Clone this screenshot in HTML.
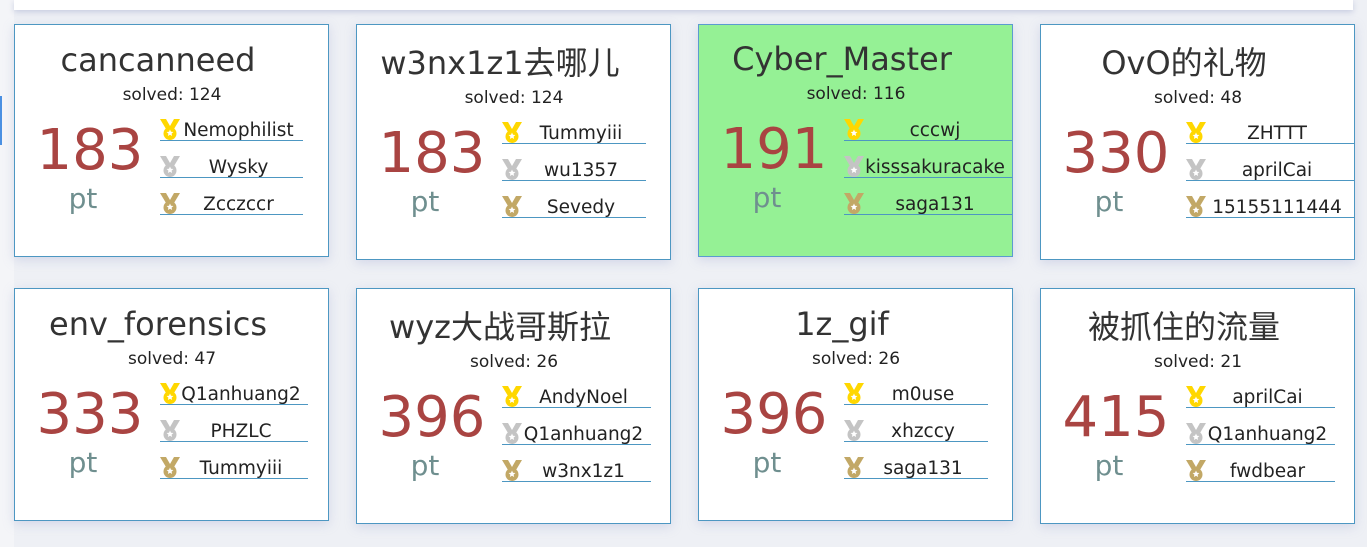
<!DOCTYPE html>
<html><head><meta charset="utf-8"><style>
*{margin:0;padding:0;box-sizing:border-box}
body{width:1367px;height:547px;background:#eef0f5;position:relative;overflow:hidden;font-family:"DejaVu Sans","Noto Sans CJK SC",sans-serif;color:#333}
.left{position:absolute;left:0;top:0;width:14px;height:547px;background:#f4f5f8}
.lbar{position:absolute;left:0;top:96px;width:2px;height:49px;background:#4a90e2}
.top{position:absolute;left:14px;top:0;width:1339px;height:10px;background:#fff;box-shadow:0 2px 6px rgba(150,160,200,.45)}
.card{position:absolute;width:315px;background:#fff;border:1px solid #4d97c2;box-shadow:0 3px 10px rgba(160,170,210,.35)}
.card.g{background:#95f195;border-color:#5b9bd0}
.in{position:absolute;left:0;right:0;top:0;bottom:0}
.nm{position:absolute;left:0;width:286px;top:14px;line-height:42px;font-size:32px;text-align:center;white-space:nowrap;color:#333}
.sv{position:absolute;left:0;width:314px;top:60px;line-height:20px;font-size:17px;text-align:center;color:#222}
.sc{position:absolute;left:0;width:150px;top:98px;line-height:56px;font-size:56px;text-align:center;color:#a94442}
.pt{position:absolute;left:0;width:136px;top:160px;line-height:28px;font-size:28px;text-align:center;color:#6f8f8f}
.rows{position:absolute;left:145px;top:79px}
.r{position:relative;height:37px;border-bottom:1px solid #4d97c2;white-space:nowrap}
.r span{display:block;text-align:center;padding-left:14px;padding-top:17px;line-height:20px;font-size:18.5px;color:#222}
.r svg{position:absolute;left:0;top:15px;z-index:2}
</style></head><body>
<div class="left"><div class="lbar"></div></div>
<div class="top"></div>

<svg width="0" height="0" style="position:absolute">
<defs>
<g id="mg"><path d="M0 0h6l4 7 4-7h6l-6 10h-8z" fill="#ffd700"/><circle cx="10" cy="14.5" r="6.5" fill="#ffd700"/><path d="M10 10.5l1 2.2 2.4.3-1.8 1.6.5 2.4-2.1-1.2-2.1 1.2.5-2.4-1.8-1.6 2.4-.3z" fill="#fff"/></g>
<g id="ms"><path d="M0 0h6l4 7 4-7h6l-6 10h-8z" fill="#c4c4c4"/><circle cx="10" cy="14.5" r="6.5" fill="#c4c4c4"/><path d="M10 10.5l1 2.2 2.4.3-1.8 1.6.5 2.4-2.1-1.2-2.1 1.2.5-2.4-1.8-1.6 2.4-.3z" fill="#fff"/></g>
<g id="mb"><path d="M0 0h6l4 7 4-7h6l-6 10h-8z" fill="#c2a866"/><circle cx="10" cy="14.5" r="6.5" fill="#c2a866"/><path d="M10 10.5l1 2.2 2.4.3-1.8 1.6.5 2.4-2.1-1.2-2.1 1.2.5-2.4-1.8-1.6 2.4-.3z" fill="#fff"/></g>
</defs></svg>

<!-- Row 1 -->
<div class="card" style="left:14px;top:24px;height:233px"><div class="in">
<div class="nm">cancanneed</div><div class="sv">solved: 124</div><div class="sc">183</div><div class="pt">pt</div>
<div class="rows" style="width:143px"><div class="r"><svg width="20" height="22"><use href="#mg"/></svg><span>Nemophilist</span></div><div class="r"><svg width="20" height="22"><use href="#ms"/></svg><span>Wysky</span></div><div class="r"><svg width="20" height="22"><use href="#mb"/></svg><span>Zcczccr</span></div></div>
</div></div>

<div class="card" style="left:356px;top:24px;height:236px"><div class="in" style="top:3px">
<div class="nm">w3nx1z1去哪儿</div><div class="sv">solved: 124</div><div class="sc">183</div><div class="pt">pt</div>
<div class="rows" style="width:144px"><div class="r"><svg width="20" height="22"><use href="#mg"/></svg><span>Tummyiii</span></div><div class="r"><svg width="20" height="22"><use href="#ms"/></svg><span>wu1357</span></div><div class="r"><svg width="20" height="22"><use href="#mb"/></svg><span>Sevedy</span></div></div>
</div></div>

<div class="card g" style="left:698px;top:24px;height:233px"><div class="in" style="top:-1px">
<div class="nm">Cyber_Master</div><div class="sv">solved: 116</div><div class="sc">191</div><div class="pt">pt</div>
<div class="rows" style="width:168px;top:80px"><div class="r"><svg width="20" height="22"><use href="#mg"/></svg><span>cccwj</span></div><div class="r"><svg width="20" height="22"><use href="#ms"/></svg><span>kisssakuracake</span></div><div class="r"><svg width="20" height="22"><use href="#mb"/></svg><span>saga131</span></div></div>
</div></div>

<div class="card" style="left:1040px;top:24px;height:236px"><div class="in" style="top:3px">
<div class="nm">OvO的礼物</div><div class="sv">solved: 48</div><div class="sc">330</div><div class="pt">pt</div>
<div class="rows" style="width:168px"><div class="r"><svg width="20" height="22"><use href="#mg"/></svg><span>ZHTTT</span></div><div class="r"><svg width="20" height="22"><use href="#ms"/></svg><span>aprilCai</span></div><div class="r"><svg width="20" height="22"><use href="#mb"/></svg><span>15155111444</span></div></div>
</div></div>

<!-- Row 2 -->
<div class="card" style="left:14px;top:288px;height:233px"><div class="in">
<div class="nm">env_forensics</div><div class="sv">solved: 47</div><div class="sc">333</div><div class="pt">pt</div>
<div class="rows" style="width:148px"><div class="r"><svg width="20" height="22"><use href="#mg"/></svg><span>Q1anhuang2</span></div><div class="r"><svg width="20" height="22"><use href="#ms"/></svg><span>PHZLC</span></div><div class="r"><svg width="20" height="22"><use href="#mb"/></svg><span>Tummyiii</span></div></div>
</div></div>

<div class="card" style="left:356px;top:288px;height:236px"><div class="in" style="top:3px">
<div class="nm">wyz大战哥斯拉</div><div class="sv">solved: 26</div><div class="sc">396</div><div class="pt">pt</div>
<div class="rows" style="width:149px"><div class="r"><svg width="20" height="22"><use href="#mg"/></svg><span>AndyNoel</span></div><div class="r"><svg width="20" height="22"><use href="#ms"/></svg><span>Q1anhuang2</span></div><div class="r"><svg width="20" height="22"><use href="#mb"/></svg><span>w3nx1z1</span></div></div>
</div></div>

<div class="card" style="left:698px;top:288px;height:233px"><div class="in">
<div class="nm">1z_gif</div><div class="sv">solved: 26</div><div class="sc">396</div><div class="pt">pt</div>
<div class="rows" style="width:144px"><div class="r"><svg width="20" height="22"><use href="#mg"/></svg><span>m0use</span></div><div class="r"><svg width="20" height="22"><use href="#ms"/></svg><span>xhzccy</span></div><div class="r"><svg width="20" height="22"><use href="#mb"/></svg><span>saga131</span></div></div>
</div></div>

<div class="card" style="left:1040px;top:288px;height:236px"><div class="in" style="top:3px">
<div class="nm">被抓住的流量</div><div class="sv">solved: 21</div><div class="sc">415</div><div class="pt">pt</div>
<div class="rows" style="width:149px"><div class="r"><svg width="20" height="22"><use href="#mg"/></svg><span>aprilCai</span></div><div class="r"><svg width="20" height="22"><use href="#ms"/></svg><span>Q1anhuang2</span></div><div class="r"><svg width="20" height="22"><use href="#mb"/></svg><span>fwdbear</span></div></div>
</div></div>
</body></html>
